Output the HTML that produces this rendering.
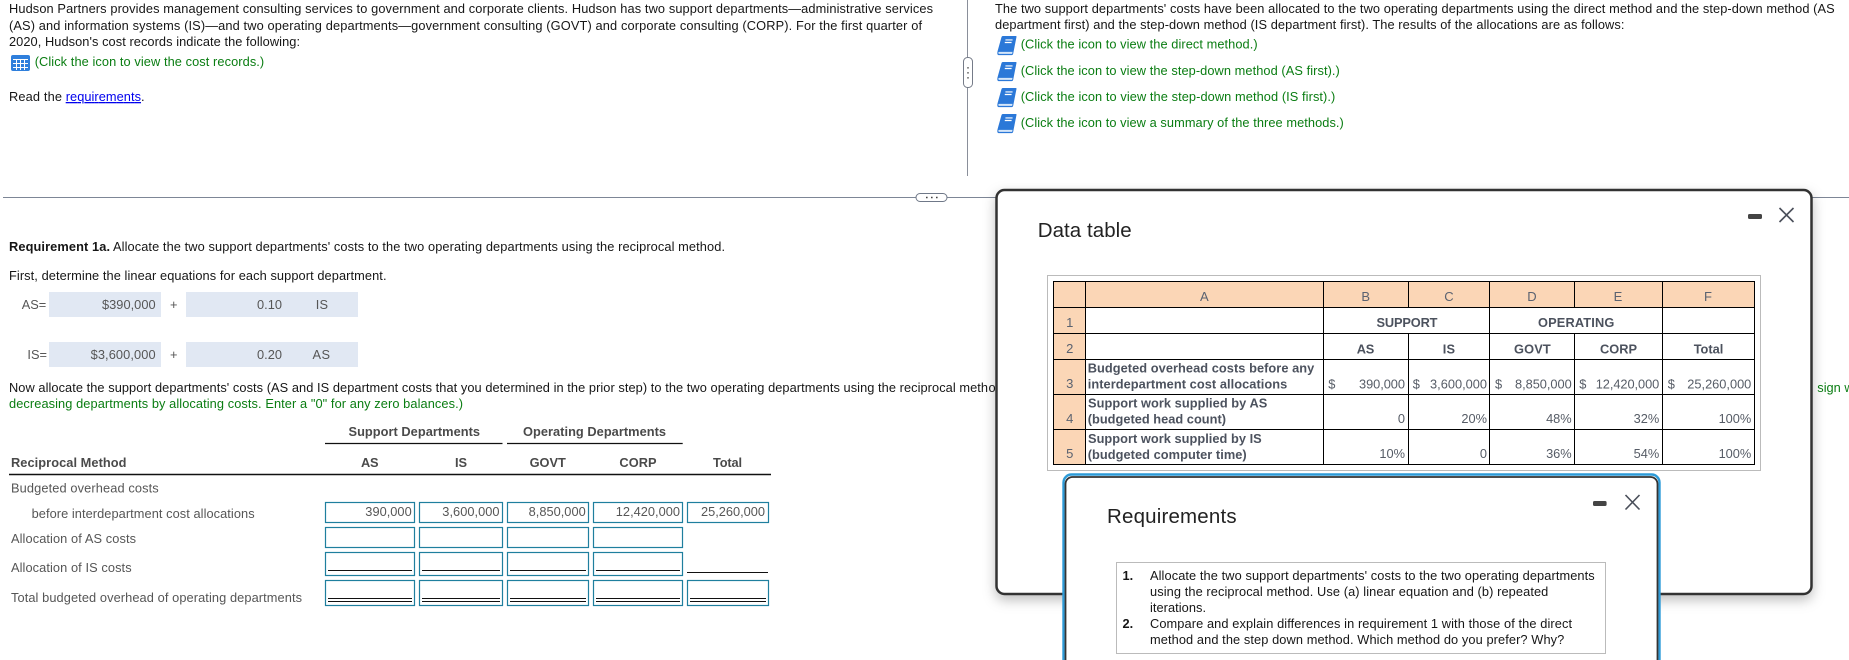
<!DOCTYPE html>
<html><head><meta charset="utf-8"><title>Reciprocal Method</title>
<style>
html,body{margin:0;padding:0;background:#fff;width:1849px;height:660px;overflow:hidden}
svg{display:block}
text{font-family:"Liberation Sans",Arial,sans-serif;font-size:12.8px;fill:#161616}
.g{fill:#0a7d12}
.l{fill:#565656}
.h{font-weight:bold;fill:#4a4a4a}
.d{fill:#565c66}
.db{font-weight:bold;fill:#4c525e}
.c{text-anchor:middle;fill:#5a6270;font-size:13px}
.t{font-size:20.5px;fill:#222}
</style></head><body>
<svg width="1849" height="660" viewBox="0 0 1849 660" xmlns="http://www.w3.org/2000/svg">
<defs>
<filter id="sh" x="-5%" y="-5%" width="110%" height="115%"><feDropShadow dx="0" dy="5" stdDeviation="6" flood-color="#000" flood-opacity=".25"/></filter>
<g id="book">
<path d="M13 3Q14 0 17 0H57Q60 0 59 3L49 54Q48 59 44 59H6Q0 59 0 53Q0 50 1 46Z" fill="#2b78d8"/>
<path d="M6 49H47L45.5 55H6Q3 55 3 52Q3 49 6 49Z" fill="#d5e6f9"/>
<path d="M25 12H47M23 20H44" stroke="#fff" stroke-width="3.6" fill="none"/>
</g>
</defs>

<!-- left pane -->
<text x="9" y="13" textLength="924">Hudson Partners provides management consulting services to government and corporate clients. Hudson has two support departments—administrative services</text>
<text x="9" y="30" textLength="913">(AS) and information systems (IS)—and two operating departments—government consulting (GOVT) and corporate consulting (CORP). For the first quarter of</text>
<text x="9" y="46" textLength="291">2020, Hudson's cost records indicate the following:</text>
<rect x="11" y="55" width="19" height="16" rx="2" fill="#2f7fdc"/>
<path d="M13 59.5H28M13 63.5H28M13 67.5H28M16.5 59V70M20.5 59V70M24.5 59V70" fill="none" stroke="#fff" stroke-width="1"/>
<text class="g" x="34.7" y="66" textLength="229.5">(Click the icon to view the cost records.)</text>
<text x="9" y="101" textLength="53">Read the</text>
<text x="65.7" y="101" textLength="75.3" style="fill:#0000ee" text-decoration="underline">requirements</text>
<text x="141" y="101">.</text>

<!-- right pane top -->
<text x="995" y="13" textLength="839.7">The two support departments' costs have been allocated to the two operating departments using the direct method and the step-down method (AS</text>
<text x="995" y="29" textLength="629.4">department first) and the step-down method (IS department first). The results of the allocations are as follows:</text>
<use href="#book" transform="translate(997.3,36) scale(.325)"/>
<use href="#book" transform="translate(997.3,62) scale(.325)"/>
<use href="#book" transform="translate(997.3,88) scale(.325)"/>
<use href="#book" transform="translate(997.3,114) scale(.325)"/>
<text class="g" x="1020.7" y="48.5" textLength="236.9">(Click the icon to view the direct method.)</text>
<text class="g" x="1020.7" y="75" textLength="319.1">(Click the icon to view the step-down method (AS first).)</text>
<text class="g" x="1020.7" y="101" textLength="314.6">(Click the icon to view the step-down method (IS first).)</text>
<text class="g" x="1020.7" y="127" textLength="323.1">(Click the icon to view a summary of the three methods.)</text>

<!-- splitters -->
<path d="M967.5 0V176" stroke="#8a8f9a" stroke-width="1"/>
<rect x="963.5" y="57.5" width="9" height="30" rx="4" fill="#fff" stroke="#757b88"/>
<path d="M968 67v1.6M968 72v1.6M968 77v1.6" stroke="#444" stroke-width="1.2"/>
<path d="M3 197.5H1849" stroke="#7d8696" stroke-width="1"/>
<rect x="916" y="193.5" width="31" height="8" rx="4" fill="#fff" stroke="#6f7888"/>
<path d="M926 197.5h1.6M931 197.5h1.6M936 197.5h1.6" stroke="#444" stroke-width="1.4"/>

<!-- requirement -->
<text x="9" y="251" textLength="101" style="font-weight:bold">Requirement 1a.</text>
<text x="113" y="251" textLength="612">Allocate the two support departments' costs to the two operating departments using the reciprocal method.</text>
<text x="9" y="280" textLength="377.5">First, determine the linear equations for each support department.</text>

<rect x="49" y="292" width="112" height="25" fill="#e1e8f3"/>
<rect x="186" y="292" width="172" height="25" fill="#e1e8f3"/>
<rect x="49" y="342" width="112" height="25" fill="#e1e8f3"/>
<rect x="186" y="342" width="172" height="25" fill="#e1e8f3"/>
<text class="l" x="21.7" y="309">AS=</text>
<text class="l" x="102" y="309" textLength="53.6">$390,000</text>
<text class="l" x="170" y="309">+</text>
<text class="l" x="257" y="309" textLength="25">0.10</text>
<text class="l" x="315.7" y="309" textLength="12.3">IS</text>
<text class="l" x="27.4" y="359">IS=</text>
<text class="l" x="90.6" y="359" textLength="65">$3,600,000</text>
<text class="l" x="170" y="359">+</text>
<text class="l" x="257" y="359" textLength="25">0.20</text>
<text class="l" x="312.5" y="359" textLength="17.5">AS</text>

<text x="9" y="392" textLength="979">Now allocate the support departments' costs (AS and IS department costs that you determined in the prior step) to the two operating departments using the reciprocal meth</text>
<text x="988.5" y="392">o</text>
<text class="g" x="1817.3" y="392">sign when</text>
<text class="g" x="9" y="408" textLength="454">decreasing departments by allocating costs. Enter a "0" for any zero balances.)</text>

<!-- reciprocal table -->
<text class="h" x="348.5" y="436" textLength="131.5">Support Departments</text>
<text class="h" x="523" y="436" textLength="143">Operating Departments</text>
<path d="M325 443.5H502.5M507 443.5H682.7" stroke="#111" stroke-width="1.2"/>
<text class="h" x="11" y="467" textLength="115.5">Reciprocal Method</text>
<text class="h" x="361" y="467" textLength="17.6">AS</text>
<text class="h" x="455" y="467" textLength="12">IS</text>
<text class="h" x="529.6" y="467" textLength="36.2">GOVT</text>
<text class="h" x="619.4" y="467" textLength="37.2">CORP</text>
<text class="h" x="713" y="467" textLength="29">Total</text>
<path d="M9 474.5H771" stroke="#111" stroke-width="1.4"/>
<text class="l" x="11" y="492.5" textLength="147.7">Budgeted overhead costs</text>
<text class="l" x="31.6" y="518" textLength="223">before interdepartment cost allocations</text>
<text class="l" x="11" y="543" textLength="125">Allocation of AS costs</text>
<text class="l" x="11" y="572" textLength="120.6">Allocation of IS costs</text>
<text class="l" x="11" y="602" textLength="291">Total budgeted overhead of operating departments</text>

<g fill="#fff" stroke="#1f7f9e" stroke-width="1.2">
<rect x="325.5" y="502.5" width="89" height="20"/><rect x="419.5" y="502.5" width="83" height="20"/><rect x="507.5" y="502.5" width="81" height="20"/><rect x="593.5" y="502.5" width="89" height="20"/><rect x="687.5" y="502.5" width="81" height="20"/>
<rect x="325.5" y="527.5" width="89" height="20"/><rect x="419.5" y="527.5" width="83" height="20"/><rect x="507.5" y="527.5" width="81" height="20"/><rect x="593.5" y="527.5" width="89" height="20"/>
<rect x="325.5" y="552.5" width="89" height="23"/><rect x="419.5" y="552.5" width="83" height="23"/><rect x="507.5" y="552.5" width="81" height="23"/><rect x="593.5" y="552.5" width="89" height="23"/>
<rect x="325.5" y="580.5" width="89" height="25"/><rect x="419.5" y="580.5" width="83" height="25"/><rect x="507.5" y="580.5" width="81" height="25"/><rect x="593.5" y="580.5" width="89" height="25"/><rect x="687.5" y="580.5" width="81" height="25"/>
</g>
<path d="M328 570.5H412M422 570.5H500M510 570.5H586M596 570.5H680M687 572.5H768M328 598.5H412M422 598.5H500M510 598.5H586M596 598.5H680M690 598.5H766M328 601.5H412M422 601.5H500M510 601.5H586M596 601.5H680M690 601.5H766" stroke="#111" stroke-width="1" fill="none"/>
<text class="l" x="365.3" y="516" textLength="46.4">390,000</text>
<text class="l" x="442.3" y="516" textLength="57.2">3,600,000</text>
<text class="l" x="528.6" y="516" textLength="57.1">8,850,000</text>
<text class="l" x="615.8" y="516" textLength="64.2">12,420,000</text>
<text class="l" x="701" y="516" textLength="64">25,260,000</text>

<!-- Data table modal -->
<rect x="996.5" y="190" width="815" height="404" rx="8" fill="#fff" stroke="#333" stroke-width="2.5" filter="url(#sh)"/>
<text class="t" x="1037.7" y="237" textLength="94">Data table</text>
<rect x="1748" y="214" width="14" height="5" rx="1.5" fill="#444"/>
<path d="M1779.5 208L1793.5 222M1793.5 208L1779.5 222" stroke="#4a4f5a" stroke-width="1.6"/>

<rect x="1047.5" y="275.5" width="713" height="195" fill="#fff" stroke="#bbb" stroke-width="1"/>
<path d="M1053.5 281.5H1754.5V307.5H1085.5V464.5H1053.5Z" fill="#fbd6b6"/>
<g fill="none" stroke="#000" stroke-width="1">
<rect x="1053.5" y="281.5" width="701" height="183"/>
<path d="M1053.5 307.5H1754.5M1053.5 333.5H1754.5M1053.5 359.5H1754.5M1053.5 394.5H1754.5M1053.5 429.5H1754.5"/>
<path d="M1085.5 281.5V464.5M1323.5 281.5V464.5M1489.5 281.5V464.5M1662.5 281.5V464.5M1408.5 281.5V307.5M1408.5 333.5V464.5M1574.5 281.5V307.5M1574.5 333.5V464.5"/>
</g>
<text class="c" x="1204.3" y="301">A</text><text class="c" x="1365.7" y="301">B</text><text class="c" x="1449" y="301">C</text><text class="c" x="1532" y="301">D</text><text class="c" x="1618" y="301">E</text><text class="c" x="1708" y="301">F</text>
<text class="c" x="1069.7" y="327">1</text><text class="c" x="1069.7" y="353">2</text><text class="c" x="1069.7" y="388">3</text><text class="c" x="1069.7" y="423">4</text><text class="c" x="1069.7" y="458">5</text>
<text class="db" x="1376.5" y="327" textLength="61">SUPPORT</text>
<text class="db" x="1538" y="327" textLength="76.3">OPERATING</text>
<text class="db" x="1356.7" y="353.5" textLength="17.6">AS</text>
<text class="db" x="1442.7" y="353.5" textLength="12.3">IS</text>
<text class="db" x="1514" y="353.5" textLength="36.7">GOVT</text>
<text class="db" x="1600" y="353.5" textLength="37">CORP</text>
<text class="db" x="1693.7" y="353.5" textLength="29.6">Total</text>
<text class="db" x="1087.7" y="372.5" textLength="226.6">Budgeted overhead costs before any</text>
<text class="db" x="1087.7" y="388.5" textLength="199.6">interdepartment cost allocations</text>
<text class="db" x="1088" y="407.5" textLength="179.3">Support work supplied by AS</text>
<text class="db" x="1087.7" y="423.5" textLength="138.3">(budgeted head count)</text>
<text class="db" x="1088" y="443" textLength="173.7">Support work supplied by IS</text>
<text class="db" x="1087.7" y="459" textLength="159">(budgeted computer time)</text>
<g>
<text class="d" x="1328.3" y="388.3">$</text><text class="d" x="1359" y="388.3" textLength="46">390,000</text>
<text class="d" x="1412.7" y="388.3">$</text><text class="d" x="1430" y="388.3" textLength="57">3,600,000</text>
<text class="d" x="1495" y="388.3">$</text><text class="d" x="1515" y="388.3" textLength="56.7">8,850,000</text>
<text class="d" x="1579.3" y="388.3">$</text><text class="d" x="1595.7" y="388.3" textLength="63.6">12,420,000</text>
<text class="d" x="1667.7" y="388.3">$</text><text class="d" x="1687.3" y="388.3" textLength="64">25,260,000</text>
<g text-anchor="end">
<text class="d" x="1405" y="423">0</text><text class="d" x="1487" y="423">20%</text><text class="d" x="1571.7" y="423">48%</text><text class="d" x="1659.3" y="423">32%</text><text class="d" x="1751.3" y="423">100%</text>
<text class="d" x="1405" y="458">10%</text><text class="d" x="1487" y="458">0</text><text class="d" x="1571.7" y="458">36%</text><text class="d" x="1659.3" y="458">54%</text><text class="d" x="1751.3" y="458">100%</text>
</g>
</g>

<!-- Requirements modal -->
<path d="M1063.5 660V482.5a8 8 0 0 1 8-8H1651.5a8 8 0 0 1 8 8V660" fill="#fff" stroke="#2d9bd8" stroke-width="2.4"/>
<path d="M1065.5 660V484a7 7 0 0 1 7-7H1650.5a7 7 0 0 1 7 7V660" fill="#fff" stroke="#333" stroke-width="1.8"/>
<text class="t" x="1107" y="523" textLength="129.6">Requirements</text>
<rect x="1593" y="501" width="13.6" height="5" rx="1.5" fill="#444"/>
<path d="M1625.5 495L1639.5 509.5M1639.5 495L1625.5 509.5" stroke="#4a4f5a" stroke-width="1.6"/>
<rect x="1116.5" y="562.5" width="489" height="91" fill="#fff" stroke="#bbb"/>
<text x="1122.5" y="580" style="font-weight:bold">1.</text>
<text x="1150" y="580" textLength="444.7">Allocate the two support departments' costs to the two operating departments</text>
<text x="1150" y="596" textLength="398.3">using the reciprocal method. Use (a) linear equation and (b) repeated</text>
<text x="1150" y="612" textLength="56">iterations.</text>
<text x="1122.5" y="628" style="font-weight:bold">2.</text>
<text x="1150" y="628" textLength="422">Compare and explain differences in requirement 1 with those of the direct</text>
<text x="1150" y="644" textLength="414.3">method and the step down method. Which method do you prefer? Why?</text>
</svg>
</body></html>
